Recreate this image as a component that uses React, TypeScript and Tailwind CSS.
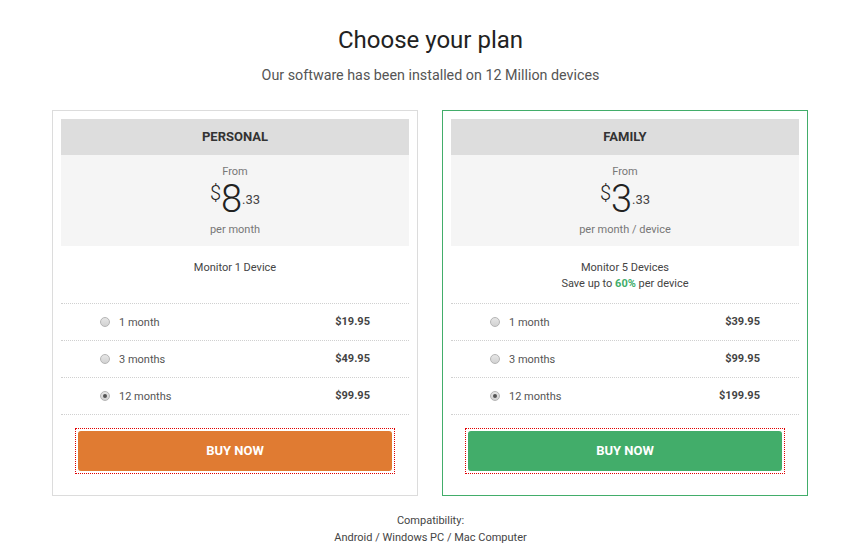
import React, { useState } from 'react';

type Option = { label: string; price: string };

type Plan = {
  name: string;
  whole: string;
  cents: string;
  per: string;
  lines: React.ReactNode[];
  options: Option[];
  accent: 'orange' | 'green';
};

const plans: Plan[] = [
  {
    name: 'PERSONAL',
    whole: '8',
    cents: '.33',
    per: 'per month',
    lines: ['Monitor 1 Device'],
    options: [
      { label: '1 month', price: '$19.95' },
      { label: '3 months', price: '$49.95' },
      { label: '12 months', price: '$99.95' },
    ],
    accent: 'orange',
  },
  {
    name: 'FAMILY',
    whole: '3',
    cents: '.33',
    per: 'per month / device',
    lines: [
      'Monitor 5 Devices',
      <>
        Save up to <span className="font-bold text-[#42ad6a]">60%</span> per device
      </>,
    ],
    options: [
      { label: '1 month', price: '$39.95' },
      { label: '3 months', price: '$99.95' },
      { label: '12 months', price: '$199.95' },
    ],
    accent: 'green',
  },
];

function Radio({ checked }: { checked: boolean }) {
  return (
    <span className="w-[10px] h-[10px] rounded-full border border-[#b5b5b5] bg-gradient-to-b from-[#e6e6e6] to-[#d2d2d2] flex items-center justify-center">
      {checked && <span className="w-[4px] h-[4px] rounded-full bg-[#555]" />}
    </span>
  );
}

function PlanCard({ plan }: { plan: Plan }) {
  const [selected, setSelected] = useState(2);
  const green = plan.accent === 'green';

  return (
    <div
      className={`w-[366px] h-[386px] border p-2 bg-white ${
        green ? 'border-[#42ad6a]' : 'border-[#dcdcdc]'
      }`}
    >
      <div className="h-9 bg-[#dddddd] flex items-center justify-center text-[13px] font-bold text-[#333]">
        {plan.name}
      </div>
      <div className="h-[91px] bg-[#f5f5f5] flex flex-col items-center pt-[10px]">
        <div className="text-[11px] leading-[14px] text-[#777]">From</div>
        <div className="flex items-start text-[#222] h-[38px] mt-[1px]">
          <span className="text-[20px] leading-[20px] mt-[3px] font-light">$</span>
          <span className="text-[38px] leading-[38px] font-light">{plan.whole}</span>
          <span className="text-[13px] leading-[13px] mt-[13px] text-[#444]">{plan.cents}</span>
        </div>
        <div className="text-[11px] leading-[14px] text-[#777] mt-[5px]">{plan.per}</div>
      </div>
      <div className="h-[57px] flex flex-col items-center pt-[14px] text-[11px] leading-[16px] text-[#444]">
        {plan.lines.map((l, i) => (
          <div key={i}>{l}</div>
        ))}
      </div>
      <div className="border-t border-dotted border-[#d0d0d0]">
        {plan.options.map((o, i) => (
          <div
            key={o.label}
            onClick={() => setSelected(i)}
            className="h-[37px] flex items-center pl-[39px] pr-[39px] border-b border-dotted border-[#d0d0d0] cursor-pointer"
          >
            <Radio checked={selected === i} />
            <span className="ml-[9px] mt-[2px] text-[11px] text-[#555]">{o.label}</span>
            <span className="ml-auto text-[11px] font-bold text-[#444]">{o.price}</span>
          </div>
        ))}
      </div>
      <div className="px-[14px] pt-[13px]">
        <div className="border border-dotted border-[#e00000] p-[2px]">
          <button
            className={`w-full h-10 rounded-[3px] text-white text-[13px] font-bold ${
              green ? 'bg-[#42ad6a]' : 'bg-[#e07b32]'
            }`}
          >
            BUY NOW
          </button>
        </div>
      </div>
    </div>
  );
}

export default function App() {
  return (
    <div className="w-[848px] h-[553px] bg-white font-['Roboto','Liberation_Sans',sans-serif] overflow-hidden">
      <div className="flex flex-col items-center pt-[24px]">
        <h1 className="text-[24px] leading-[32px] text-[#222] ml-[13px]">Choose your plan</h1>
        <p className="text-[14.3px] leading-[18px] text-[#555] mt-[10px] ml-[13px]">
          Our software has been installed on 12 Million devices
        </p>
      </div>
      <div className="flex gap-[24px] pl-[52px] mt-[26px]">
        {plans.map((p) => (
          <PlanCard key={p.name} plan={p} />
        ))}
      </div>
      <div className="flex flex-col items-center mt-[16px] ml-[13px] text-[11px] leading-[17px] text-[#444]">
        <div>Compatibility:</div>
        <div>Android / Windows PC / Mac Computer</div>
      </div>
    </div>
  );
}
